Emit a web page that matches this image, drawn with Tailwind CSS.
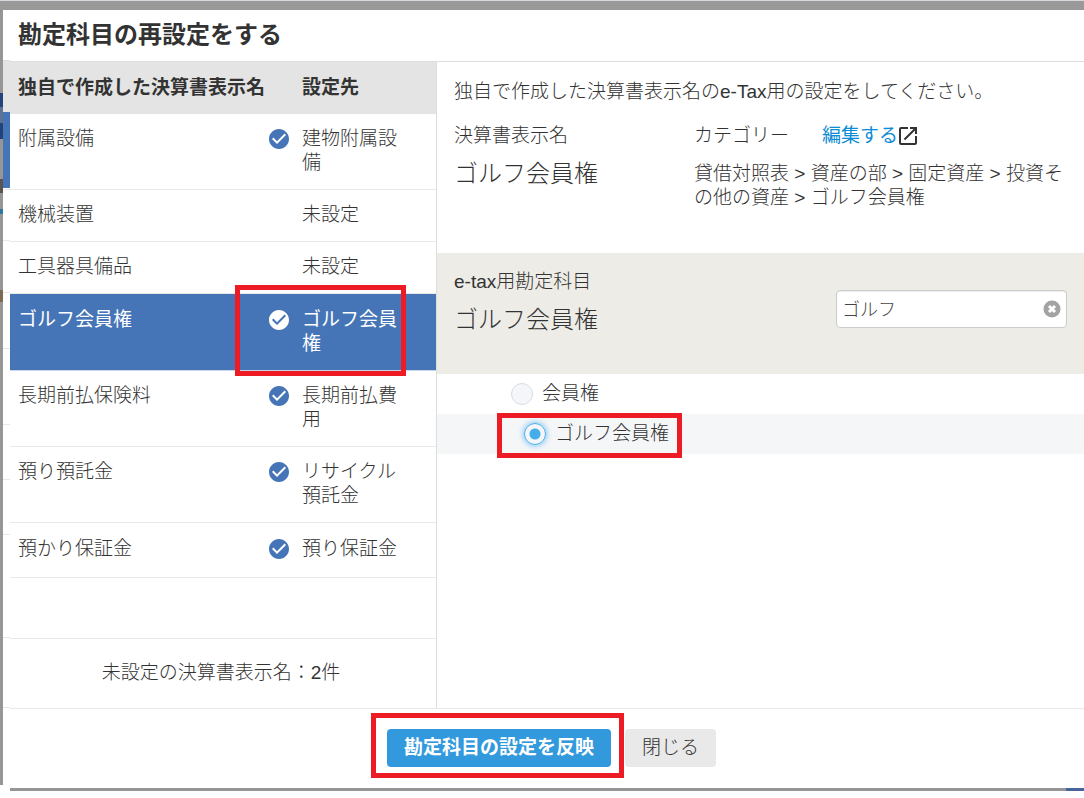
<!DOCTYPE html>
<html lang="ja">
<head>
  <meta charset="UTF-8">
  <meta name="viewport" content="width=device-width, initial-scale=1.0">
  <title>勘定科目の再設定をする</title>
  <script src="https://cdn.jsdelivr.net/npm/@tailwindcss/browser@4"></script>
</head>
<body class="min-h-screen bg-white font-['Liberation_Sans','Noto_Sans_CJK_JP',sans-serif] font-light text-[19px] leading-6 text-[#333]">

  <!-- Icons -->
  <svg class="hidden">
    <symbol id="check" viewBox="0 0 24 24">
      <path fill="currentColor" d="M12 2C6.48 2 2 6.48 2 12s4.48 10 10 10 10-4.48 10-10S17.52 2 12 2zm-2 15l-5-5 1.41-1.41L10 14.17l7.59-7.59L19 8l-9 9z"/>
    </symbol>
  </svg>

  <!-- Dimmed page behind the dialog -->
  <div class="h-[10px] border-t border-[#d5d8dc] bg-[#999]"></div>

  <div class="flex">
    <div class="flex h-[775px] w-[3px] shrink-0 flex-col bg-[#969696]">
      <div class="mt-[83px] h-[14px] bg-[#22437a]"></div>
      <div class="h-[16px] bg-[#5d7391]"></div>
      <div class="h-[16px] bg-[#22437a]"></div>
      <div class="mt-[40px] h-[14px] bg-[#5c5450]"></div>
      <div class="mt-[16px] h-[5px] bg-[#2b7a9e]"></div>
      <div class="mt-[76px] h-[12px] bg-[#7c6a55]"></div>
    </div>

    <!-- Left edge of the dialog -->
    <div class="flex w-[7px] shrink-0 flex-col rounded-tl-sm bg-white">
      <div class="h-[51px] border-b border-[#ddd]"></div>
      <div class="h-[51px] bg-[#e4e4e4]"></div>
      <div class="h-[76px] bg-[#4575b6]"></div>
      <div class="h-[2px] border-b border-[#e8e8e8]"></div>
      <div class="h-[51px] border-b border-[#e8e8e8]"></div>
      <div class="h-[52px] border-b border-[#e8e8e8]"></div>
      <div class="h-[56px] border-b border-[#e8e8e8]"></div>
      <div class="h-[76px] border-b border-[#e8e8e8]"></div>
      <div class="h-[55px] border-b border-[#e8e8e8]"></div>
      <div class="h-[55px] border-b border-[#e8e8e8]"></div>
      <div class="h-[103px] border-b border-[#e8e8e8]"></div>
      <div class="h-[70px] border-b border-[#e8e8e8]"></div>
    </div>

    <!-- Dialog -->
    <main class="flex min-w-0 flex-1 flex-col bg-white">
      <header class="h-[52px] border-b border-[#ddd] px-2">
        <h1 class="text-2xl leading-[50px] font-bold">勘定科目の再設定をする</h1>
      </header>

      <div class="flex border-b border-[#e8e8e8]">
        <!-- Account list -->
        <section class="flex w-[427px] shrink-0 flex-col border-r border-[#ddd]">
          <table class="w-full table-fixed border-collapse text-left">
            <thead class="bg-[#e4e4e4]">
              <tr class="h-[52px]">
                <th class="pl-2 font-bold whitespace-nowrap">独自で作成した決算書表示名</th>
                <th class="w-[166px] pl-8 font-bold">設定先</th>
              </tr>
            </thead>
            <tbody class="align-top">
              <tr class="border-b border-[#e8e8e8]">
                <td class="pt-[13px] pb-[14px] pl-2">附属設備</td>
                <td class="pt-[13px] pb-[14px]">
                  <div class="flex"><svg class="h-6 w-6 shrink-0 -ml-[3px] text-[#4575b6]"><use href="#check"/></svg><span class="w-[100px] ml-[11px]">建物附属設備</span></div>
                </td>
              </tr>
              <tr class="border-b border-[#e8e8e8]">
                <td class="pt-[13px] pb-[14px] pl-2">機械装置</td>
                <td class="pt-[13px] pb-[14px] pl-8">未設定</td>
              </tr>
              <tr class="border-b border-[#e8e8e8]">
                <td class="pt-[13px] pb-[14px] pl-2">工具器具備品</td>
                <td class="pt-[13px] pb-[14px] pl-8">未設定</td>
              </tr>
              <tr class="border-b border-[#c9d6e8] bg-[#4575b6] font-normal text-white">
                <td class="pt-[14px] pb-[14px] pl-2">ゴルフ会員権</td>
                <td class="relative pt-[14px] pb-[14px]">
                  <div class="flex"><svg class="h-6 w-6 shrink-0 -ml-[3px]"><use href="#check"/></svg><span class="w-[100px] ml-[11px]">ゴルフ会員権</span></div>
                  <div class="pointer-events-none absolute -top-[9px] -left-[35px] h-[91px] w-[171px] border-5 border-[#ed1c24]"></div>
                </td>
              </tr>
              <tr class="border-b border-[#e8e8e8]">
                <td class="pt-[13px] pb-[14px] pl-2">長期前払保険料</td>
                <td class="pt-[13px] pb-[14px]">
                  <div class="flex"><svg class="h-6 w-6 shrink-0 -ml-[3px] text-[#4575b6]"><use href="#check"/></svg><span class="w-[100px] ml-[11px]">長期前払費用</span></div>
                </td>
              </tr>
              <tr class="border-b border-[#e8e8e8]">
                <td class="pt-[13px] pb-[14px] pl-2">預り預託金</td>
                <td class="pt-[13px] pb-[14px]">
                  <div class="flex"><svg class="h-6 w-6 shrink-0 -ml-[3px] text-[#4575b6]"><use href="#check"/></svg><span class="w-[100px] ml-[11px]">リサイクル預託金</span></div>
                </td>
              </tr>
              <tr class="border-b border-[#e8e8e8]">
                <td class="pt-[14px] pb-4 pl-2">預かり保証金</td>
                <td class="pt-[14px] pb-4">
                  <div class="flex"><svg class="h-6 w-6 shrink-0 -ml-[3px] text-[#4575b6]"><use href="#check"/></svg><span class="w-[100px] ml-[11px]">預り保証金</span></div>
                </td>
              </tr>
            </tbody>
          </table>
          <p class="mt-[60px] border-t border-[#e8e8e8] pt-[22px] pb-[23px] pr-1 text-center">未設定の決算書表示名：2件</p>
        </section>

        <!-- Detail of the selected account -->
        <section class="min-w-0 flex-1">
          <div class="px-[17px] pt-[18px] pb-[43px]">
            <p>独自で作成した決算書表示名のe-Tax用の設定をしてください。</p>
            <div class="mt-5 flex">
              <div class="w-60 shrink-0">
                <h2>決算書表示名</h2>
                <p class="mt-[14px] text-2xl leading-6">ゴルフ会員権</p>
              </div>
              <div>
                <div class="flex items-center">
                  <h2>カテゴリー</h2>
                  <a href="#" class="ml-[33px] flex items-center font-normal text-[#0d8bd4]">編集する
                    <svg class="h-6 w-6 -ml-[2px] text-[#333]" viewBox="0 0 24 24"><path fill="currentColor" d="M19 19H5V5h7V3H5a2 2 0 0 0-2 2v14a2 2 0 0 0 2 2h14c1.100 0 2-.9 2-2v-7h-2v7zM14 3v2h3.590l-9.830 9.830 1.410 1.410L19 6.410V10h2V3h-7z"/></svg>
                  </a>
                </div>
                <p class="mt-[14px]">貸借対照表 &gt; 資産の部 &gt; 固定資産 &gt; 投資その他の資産 &gt; ゴルフ会員権</p>
              </div>
            </div>
          </div>

          <div class="flex h-[121px] items-start justify-between bg-[#edece7] px-[17px]">
            <div class="pt-[17px]">
              <h2>e-tax用勘定科目</h2>
              <p class="mt-[14px] text-2xl leading-6">ゴルフ会員権</p>
            </div>
            <div class="relative mt-[37px]">
              <input type="text" value="ゴルフ" aria-label="勘定科目を検索" class="h-[38px] w-[231px] rounded border border-[#ccc] bg-white pr-8 pb-[3px] pl-[5px] text-[18px] text-[#444] shadow-[inset_0_1px_1px_rgba(0,0,0,0.08)]">
              <button type="button" aria-label="クリア" class="absolute top-[10px] right-[6px]">
                <svg class="h-[18px] w-[18px]" viewBox="0 0 18 18"><circle cx="9" cy="9" r="8.500" fill="#a3a3a3"/><path d="M6 6l6 6M12 6l-6 6" stroke="#fff" stroke-width="3"/></svg>
              </button>
            </div>
          </div>

          <label class="flex h-10 items-center pl-[74px]">
            <input type="radio" name="account" class="h-[22px] w-[22px] appearance-none rounded-full border border-[#d8dce6] bg-[#f5f6f9]">
            <span class="ml-[9px]">会員権</span>
          </label>
          <label class="relative flex h-10 items-center bg-[#f5f6f8] pl-[87px]">
            <input type="radio" name="account" checked class="h-[22px] w-[22px] appearance-none rounded-full border border-[#45aee8] bg-[radial-gradient(circle,#45aee8_5px,#f5f6f9_6px)] shadow-[0_0_6px_#5bb5f5]">
            <span class="ml-[9px]">ゴルフ会員権</span>
            <span class="pointer-events-none absolute -top-px left-[60px] h-[45px] w-[185px] border-5 border-[#ed1c24]"></span>
          </label>
        </section>
      </div>

      <footer class="flex h-[79px] items-center justify-center gap-[14px] pb-[2px] pl-[9px]">
        <div class="relative">
          <button type="button" class="h-[38px] rounded bg-[#3399dd] px-[17px] font-bold text-white">勘定科目の設定を反映</button>
          <div class="pointer-events-none absolute -top-4 -right-[13px] -bottom-[11px] -left-4 border-5 border-[#ed1c24]"></div>
        </div>
        <button type="button" class="h-[38px] rounded bg-[#e9e9e9] px-[17px]">閉じる</button>
      </footer>
      <div class="flex h-[3px] bg-[#939597]">
        <div class="ml-auto w-[18px] bg-[#48649a]"></div>
      </div>
    </main>
  </div>

</body>
</html>
